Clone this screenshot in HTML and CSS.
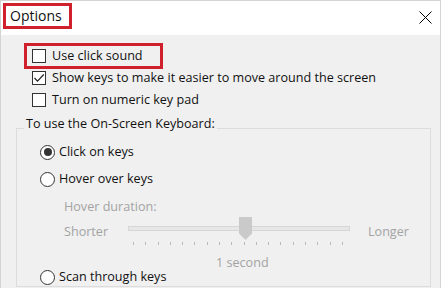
FILE: index.html
```html
<!DOCTYPE html>
<html lang="en">
<head>
  <meta charset="UTF-8" />
  <title>Options</title>
  <link rel="stylesheet" href="styles.css">
</head>
<body>
  <div class="window">
    <!-- Title bar -->
    <div class="titlebar">
      <span class="title">Options</span>
      <svg class="close" width="13" height="13" viewBox="0 0 13 13">
        <path d="M0.5 0.5 L12.5 12.5 M12.5 0.5 L0.5 12.5" stroke="#000" stroke-width="1" fill="none" />
      </svg>
    </div>

    <div class="content">
      <!-- Check options -->
      <div class="checks">
        <div class="row"><label class="check marked"><span class="box"></span>Use click sound</label></div>
        <div class="row">
          <label class="check">
            <span class="box">
              <svg width="12" height="12" viewBox="0 0 12 12"><path d="M1.5 6 L4.5 9.2 L10.8 2.5" stroke="#222" stroke-width="1.2" fill="none" /></svg>
            </span>Show keys to make it easier to move around the screen
          </label>
        </div>
        <div class="row"><label class="check"><span class="box"></span>Turn on numeric key pad</label></div>
      </div>

      <!-- Keyboard mode group -->
      <fieldset class="group">
        <legend>To use the On-Screen Keyboard:</legend>
        <label class="radio first"><span class="dot on"></span>Click on keys</label>
        <label class="radio second"><span class="dot"></span>Hover over keys</label>

        <div class="hover">
          <div class="hover-title">Hover duration:</div>
          <div class="slider-row">
            <span class="end">Shorter</span>
            <div class="slider">
              <div class="track"><div class="thumb"></div></div>
              <div class="ticks">
                <i></i><i></i><i></i><i></i><i></i><i></i><i></i><i></i><i></i>
                <i></i><i></i><i></i><i></i><i></i><i></i><i></i><i></i><i></i>
              </div>
            </div>
            <span class="end longer">Longer</span>
          </div>
          <div class="value">1 second</div>
        </div>

        <label class="radio third"><span class="dot"></span>Scan through keys</label>
      </fieldset>
    </div>
  </div>
</body>
</html>
```

FILE: styles.css
```css
/* Reset */
* { box-sizing: border-box; margin: 0; padding: 0; }
body { font-family: "Open Sans", "Noto Sans", sans-serif; font-size: 12.6px; color: #111; background: #fff; overflow: hidden; }

/* Window frame */
.window { width: 441px; height: 289px; overflow: hidden; border: 1px solid #d4d4d4; background: #f0f0f0; }

/* Title bar */
.titlebar { height: 34px; background: #fff; display: flex; justify-content: space-between; align-items: flex-start; padding: 5px 8px 0 5px; }
.title { display: inline-block; font-size: 14px; line-height: 20px; padding: 0 7px 0 4px; outline: 3px solid #d0202b; }
.close { margin-top: 5px; }

/* Body */
.content { padding: 10px 9px 0 15px; }

/* Check rows */
.checks { padding-left: 16px; }
.row { height: 22px; display: flex; align-items: center; }
.check { display: inline-flex; align-items: center; line-height: 16px; position: relative; }
.box { width: 14px; height: 14px; border: 1px solid #333; background: #fff; margin-right: 6px; display: flex; align-items: center; justify-content: center; }
.marked::after { content: ""; position: absolute; left: -8px; right: -20px; top: -5px; bottom: -5px; border: 3px solid #d0202b; }

/* Group box */
.group { margin-top: 5px; border: 1px solid #dcdcdc; padding: 4px 0 2px 23px; height: 171px; }
.group legend { line-height: 16px; padding: 0 2px 8px; margin-left: -16px; }

/* Radio rows */
.radio { display: flex; align-items: center; height: 16px; line-height: 16px; }
.radio.second { margin-top: 11px; }
.dot { width: 15px; height: 15px; border: 1px solid #333; border-radius: 50%; background: #fff; margin-right: 4px; display: flex; align-items: center; justify-content: center; }
.dot.on::after { content: ""; width: 8px; height: 8px; border-radius: 50%; background: #333; }

/* Disabled hover settings */
.hover { margin-left: 24px; color: #a3a3a3; }
.hover-title { margin-top: 12px; line-height: 16px; }
.slider-row { margin-top: 4px; height: 26px; display: flex; align-items: center; }
.end { width: 64px; line-height: 16px; }
.end.longer { width: auto; margin-left: 18px; }
.slider { width: 222px; height: 26px; }
.track { position: relative; margin-top: 7px; height: 5px; border: 1px solid #d6d6d6; background: #e7e7e7; }
.thumb { position: absolute; left: 110px; top: -10px; width: 13px; height: 23px; background: #cacaca; clip-path: polygon(0 0, 100% 0, 100% 72%, 50% 100%, 0 72%); }
.ticks { margin: 11px 0 0 5px; width: 210px; display: flex; justify-content: space-between; }
.ticks i { width: 1px; height: 3px; background: #b8b8b8; }
.value { margin-top: 12px; padding-left: 152px; line-height: 12px; }
.radio.third { margin-top: 0; }
```
